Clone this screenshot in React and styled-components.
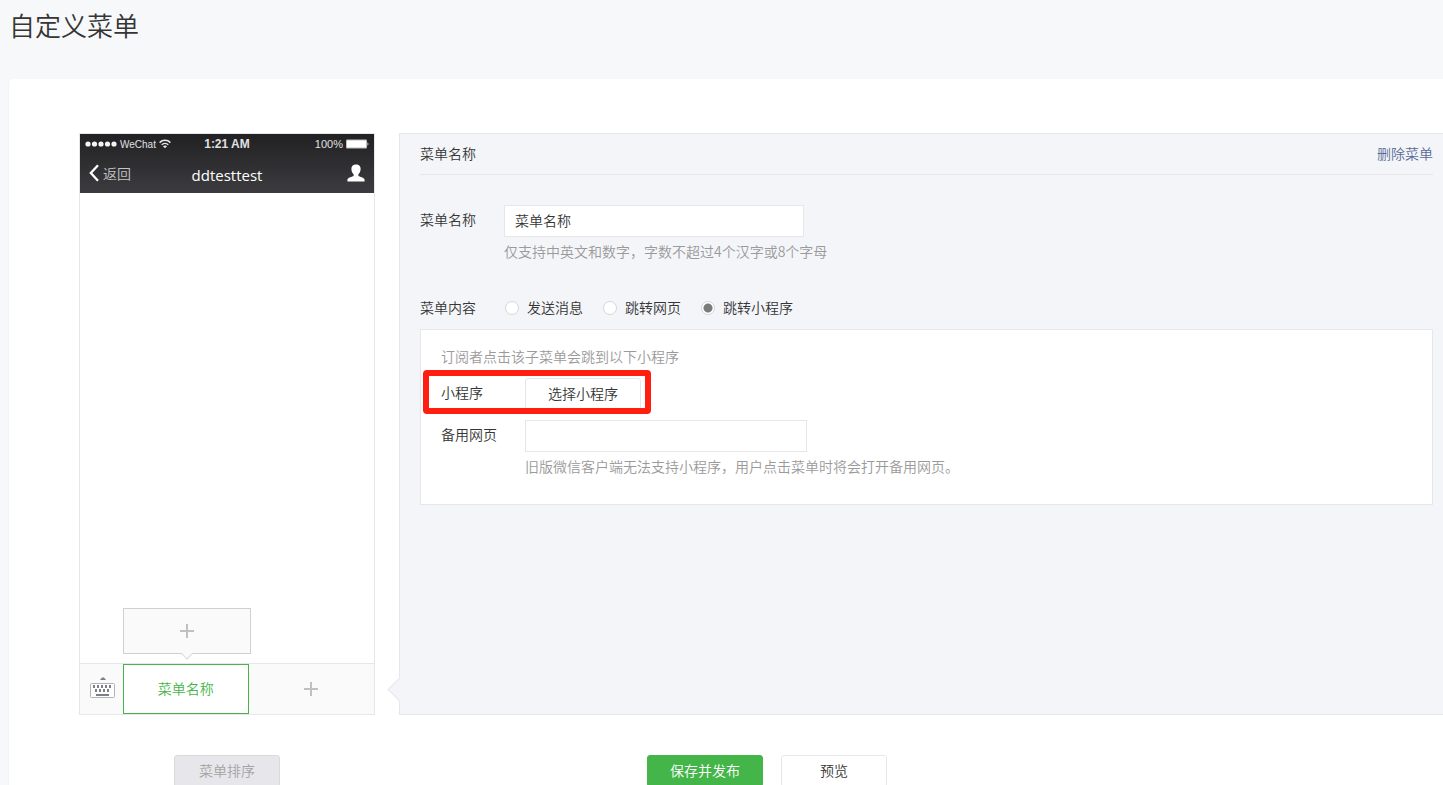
import React, { useState } from 'react'
import styled, { createGlobalStyle, css } from 'styled-components'

const color = {
  page: '#f6f8f9',
  white: '#ffffff',
  panel: '#f4f5f9',
  border: '#e7e7eb',
  darkBorder: '#d0d0d0',
  text: '#353535',
  hint: '#9a9a9a',
  green: '#44b549',
  link: '#576b95',
  mark: '#ff1e10',
}

const sans = "'Noto Sans CJK SC', 'Liberation Sans', sans-serif"

const GlobalStyle = createGlobalStyle`
  *, *:before, *:after {
    box-sizing: border-box;
  }
  body {
    margin: 0;
    background-color: ${color.page};
    color: ${color.text};
    font-family: ${sans};
    font-size: 14px;
    font-weight: 350;
  }
  button, input {
    font: inherit;
    color: inherit;
  }
`

const Page = styled.main`
  height: 100vh;
  overflow: hidden;
  padding: 8px 0 0 9px;
`

const PageTitle = styled.h1`
  margin: 0 0 37px;
  font-size: 26px;
  line-height: 34px;
  font-weight: 350;
`

const Card = styled.div`
  min-height: 100vh;
  padding: 54px 0 40px 70px;
  background-color: ${color.white};
  border-radius: 4px 0 0 0;
  box-shadow: 0 1px 2px rgba(0, 0, 0, 0.08);
`

const Columns = styled.div`
  display: flex;
  gap: 24px;
`

// phone preview

const Phone = styled.section`
  flex: 0 0 296px;
  display: flex;
  flex-direction: column;
  border: 1px solid ${color.border};
`

const PhoneHeader = styled.div`
  color: ${color.white};
  background-image: linear-gradient(#212123, #3c3c40);
`

const StatusBar = styled.div`
  display: grid;
  grid-template-columns: 1fr auto 1fr;
  align-items: center;
  height: 20px;
  padding: 0 5px;
  font-family: 'Liberation Sans', Arial, sans-serif;
  font-size: 11px;
  font-weight: 400;
  color: #e0e0e0;
`

const StatusGroup = styled.div`
  display: flex;
  align-items: center;
  gap: 3px;
  justify-content: ${({ $end }) => ($end ? 'flex-end' : 'flex-start')};
`

const Carrier = styled.span`
  font-size: 10px;
`

const Clock = styled.span`
  font-size: 12px;
  font-weight: 700;
`

const NavBar = styled.div`
  display: grid;
  grid-template-columns: 1fr auto 1fr;
  align-items: center;
  height: 39px;
  padding: 0 9px 2px;
`

const Back = styled.span`
  display: flex;
  align-items: center;
  gap: 4px;
  color: #c4c4c6;
`

const Account = styled.span`
  padding-top: 4px;
  font-family: 'Open Sans', 'Noto Sans', sans-serif;
  font-size: 15px;
  font-weight: 400;
`

const Person = styled.svg`
  justify-self: end;
`

const PhoneScreen = styled.div`
  height: 470px;
`

const MenuBar = styled.div`
  display: flex;
  height: 51px;
  border-top: 1px solid ${color.border};
  background-color: #fafafa;
`

const Keyboard = styled.div`
  flex: 0 0 43px;
  display: flex;
  align-items: center;
  justify-content: center;
  padding: 0 0 3px 2px;
`

const MenuSlot = styled.div`
  position: relative;
  flex: 1;
  display: flex;
`

const MenuButton = styled.button`
  flex: 1;
  display: flex;
  align-items: center;
  justify-content: center;
  padding: 0;
  border: 1px solid transparent;
  background: none;
  cursor: pointer;
  ${({ $active }) => $active && css`
    padding-bottom: 2px;
    border-color: ${color.green};
    background-color: ${color.white};
    color: ${color.green};
  `}
`

const SubMenu = styled.div`
  position: absolute;
  left: 0;
  bottom: 60px;
  width: 128px;
  height: 46px;
  display: flex;
  border: 1px solid ${color.darkBorder};
  background-color: #fafafa;
  &:after {
    content: '';
    position: absolute;
    left: 59px;
    bottom: -5px;
    width: 8px;
    height: 8px;
    border: solid #dcdcdc;
    border-width: 0 1px 1px 0;
    background-color: #fafafa;
    transform: rotate(45deg);
  }
`

// editor

const Editor = styled.section`
  position: relative;
  flex: 1;
  padding: 0 10px 0 20px;
  border: 1px solid ${color.border};
  border-right: 0;
  background-color: ${color.panel};
  &:before {
    content: '';
    position: absolute;
    left: -9px;
    bottom: 16px;
    width: 17px;
    height: 17px;
    border: solid ${color.border};
    border-width: 0 0 1px 1px;
    background-color: ${color.panel};
    transform: rotate(45deg);
  }
`

const EditorHead = styled.div`
  display: flex;
  justify-content: space-between;
  height: 41px;
  margin-bottom: 30px;
  line-height: 38px;
  border-bottom: 1px solid ${color.border};
`

const EditorTitle = styled.h2`
  margin: 0;
  font-size: 14px;
  font-weight: 350;
`

const DeleteLink = styled.a`
  color: ${color.link};
  text-decoration: none;
`

const Field = styled.div`
  display: flex;
  margin-top: ${({ $top }) => $top || 0}px;
`

const Label = styled.label`
  flex: 0 0 84px;
  line-height: 28px;
`

const TextInput = styled.input`
  display: block;
  width: ${({ $width }) => $width}px;
  height: 32px;
  padding: 0 10px 2px;
  border: 1px solid ${color.border};
  border-radius: 0;
  background-color: ${color.white};
  outline: none;
`

const Hint = styled.p`
  margin: ${({ $top }) => $top || 0}px 0 0;
  padding-bottom: 2px;
  line-height: 20px;
  color: ${color.hint};
`

const RadioGroup = styled.div`
  display: flex;
  gap: 20px;
  padding-left: 1px;
`

const RadioLabel = styled.label`
  display: flex;
  gap: 8px;
  height: 30px;
  line-height: 28px;
`

const Radio = styled.input`
  appearance: none;
  width: 14px;
  height: 14px;
  margin: 8px 0 0;
  border: 1px solid #d5d6da;
  border-radius: 50%;
  background-color: ${color.white};
  &:checked {
    background-image: radial-gradient(circle, #7b7b7b 4px, transparent 5px);
  }
`

const TargetBox = styled.div`
  margin-top: 6px;
  padding: 16px 20px 26px;
  border: 1px solid ${color.border};
  background-color: ${color.white};
`

const MarkedField = styled(Field)`
  position: relative;
  &:after {
    content: '';
    position: absolute;
    top: -8px;
    left: -18px;
    width: 228px;
    height: 44px;
    border: 6px solid ${color.mark};
    border-radius: 4px;
    pointer-events: none;
  }
`

const Button = styled.button`
  width: ${({ $width }) => $width || 106}px;
  height: 32px;
  padding: 0 0 2px;
  border: 1px solid ${color.border};
  border-radius: 3px;
  background-color: ${color.white};
  cursor: pointer;
  ${({ $primary }) => $primary && css`
    border-color: ${color.green};
    background-color: ${color.green};
    color: ${color.white};
  `}
  &:disabled {
    border-color: #d9dadc;
    background-color: #e7e7eb;
    color: #a3a3a3;
    cursor: default;
  }
`

const Actions = styled.div`
  display: flex;
  gap: 24px;
  margin-top: 40px;
`

const SortAction = styled.div`
  flex: 0 0 296px;
  text-align: center;
`

const SaveActions = styled.div`
  display: flex;
  gap: 18px;
  padding-left: 248px;
`

const Signal = () => (
  <svg width="32" height="6" fill="#f4f4f4" aria-hidden="true">
    {[3, 9.5, 16, 22.5, 29].map(x => <circle key={x} cx={x} cy="3" r="2.6" />)}
  </svg>
)

const Wifi = () => (
  <svg width="12" height="10" viewBox="0 0 12 10" fill="none" stroke="#e8e8e8" strokeWidth="1.5" aria-hidden="true">
    <path d="M0.6 3.6C3.6 0.6 8.4 0.6 11.4 3.6" />
    <path d="M2.7 5.8C4.6 4 7.4 4 9.3 5.8" />
    <path d="M6 9.2L4 7.3C5.1 6.3 6.9 6.3 8 7.3Z" fill="#e8e8e8" stroke="none" />
  </svg>
)

const Battery = () => (
  <svg width="23" height="10" viewBox="0 0 23 10" aria-hidden="true">
    <rect x="0" y="0.5" width="21" height="9" rx="1" fill="#bcbcbe" />
    <rect x="1" y="1.5" width="19" height="7" fill="#ffffff" />
    <path d="M21.5 3.3c1.2 0.4 1.2 3 0 3.4z" fill="#e8e8e8" />
  </svg>
)

const Chevron = () => (
  <svg width="10" height="18" viewBox="0 0 10 18" fill="none" stroke="#ffffff" strokeWidth="2.3" aria-hidden="true">
    <path d="M9 1.2L1.8 9L9 16.8" />
  </svg>
)

const PersonIcon = () => (
  <Person width="18" height="18" viewBox="0 0 18 18" fill="#ffffff" aria-hidden="true">
    <path d="M9 0.5C6 0.5 4.2 2.4 4.4 5.2C4.5 7.4 5.4 9.2 6.6 10.2V12C4.8 13 0.6 13.4 0.4 16V17.5H17.6V16C17.4 13.4 13.2 13 11.4 12V10.2C12.6 9.2 13.5 7.4 13.6 5.2C13.8 2.4 12 0.5 9 0.5Z" />
  </Person>
)

const Plus = () => (
  <svg width="14" height="14" fill="#c0c0c0" aria-hidden="true">
    <path d="M6 0h2v6h6v2H8v6H6V8H0V6h6z" />
  </svg>
)

const KeyboardIcon = () => (
  <svg width="25" height="21" viewBox="0 0 25 21" aria-hidden="true">
    <path d="M10 3L12 0.5h2L16 3z" fill="#7c7f88" />
    <rect x="0.5" y="6.5" width="24" height="14" rx="1" fill="#fdfdfd" stroke="#b2b3b8" />
    <g fill="#7c7f88">
      {[3, 7, 11, 15, 19].map(x => <rect key={x} x={x} y="8" width="2" height="3" />)}
      {[5, 9, 13, 17].map(x => <rect key={x} x={x} y="12" width="2" height="3" />)}
      <rect x="6" y="17" width="13" height="2" />
    </g>
  </svg>
)

const contentTypes = ['发送消息', '跳转网页', '跳转小程序']

function PhonePreview({ name }) {
  return (
    <Phone>
      <PhoneHeader>
        <StatusBar>
          <StatusGroup>
            <Signal />
            <Carrier>WeChat</Carrier>
            <Wifi />
          </StatusGroup>
          <Clock>1:21 AM</Clock>
          <StatusGroup $end>
            <span>100%</span>
            <Battery />
          </StatusGroup>
        </StatusBar>
        <NavBar>
          <Back><Chevron />返回</Back>
          <Account>ddtesttest</Account>
          <PersonIcon />
        </NavBar>
      </PhoneHeader>
      <PhoneScreen />
      <MenuBar>
        <Keyboard><KeyboardIcon /></Keyboard>
        <MenuSlot>
          <SubMenu>
            <MenuButton type="button" aria-label="添加子菜单"><Plus /></MenuButton>
          </SubMenu>
          <MenuButton type="button" $active>{name}</MenuButton>
        </MenuSlot>
        <MenuSlot>
          <MenuButton type="button" aria-label="添加菜单"><Plus /></MenuButton>
        </MenuSlot>
      </MenuBar>
    </Phone>
  )
}

function App() {
  const [name, setName] = useState('菜单名称')
  const [type, setType] = useState('跳转小程序')
  const [url, setUrl] = useState('')

  return (
    <Page>
      <GlobalStyle />
      <PageTitle>自定义菜单</PageTitle>
      <Card>
        <Columns>
          <PhonePreview name={name} />
          <Editor>
            <EditorHead>
              <EditorTitle>{name}</EditorTitle>
              <DeleteLink href="#delete">删除菜单</DeleteLink>
            </EditorHead>
            <Field>
              <Label htmlFor="menu-name">菜单名称</Label>
              <div>
                <TextInput id="menu-name" $width={300} value={name} onChange={e => setName(e.target.value)} />
                <Hint $top={4}>仅支持中英文和数字，字数不超过4个汉字或8个字母</Hint>
              </div>
            </Field>
            <Field $top={30}>
              <Label as="span" id="menu-content">菜单内容</Label>
              <RadioGroup role="radiogroup" aria-labelledby="menu-content">
                {contentTypes.map(item => (
                  <RadioLabel key={item}>
                    <Radio type="radio" name="content" checked={type === item} onChange={() => setType(item)} />
                    {item}
                  </RadioLabel>
                ))}
              </RadioGroup>
            </Field>
            <TargetBox>
              <Hint>订阅者点击该子菜单会跳到以下小程序</Hint>
              <MarkedField $top={10}>
                <Label htmlFor="mini-program">小程序</Label>
                <Button type="button" id="mini-program" $width={116}>选择小程序</Button>
              </MarkedField>
              <Field $top={10}>
                <Label htmlFor="backup-url">备用网页</Label>
                <div>
                  <TextInput id="backup-url" $width={282} value={url} onChange={e => setUrl(e.target.value)} />
                  <Hint $top={4}>旧版微信客户端无法支持小程序，用户点击菜单时将会打开备用网页。</Hint>
                </div>
              </Field>
            </TargetBox>
          </Editor>
        </Columns>
        <Actions>
          <SortAction>
            <Button type="button" disabled>菜单排序</Button>
          </SortAction>
          <SaveActions>
            <Button type="button" $width={116} $primary>保存并发布</Button>
            <Button type="button">预览</Button>
          </SaveActions>
        </Actions>
      </Card>
    </Page>
  )
}

export default App
